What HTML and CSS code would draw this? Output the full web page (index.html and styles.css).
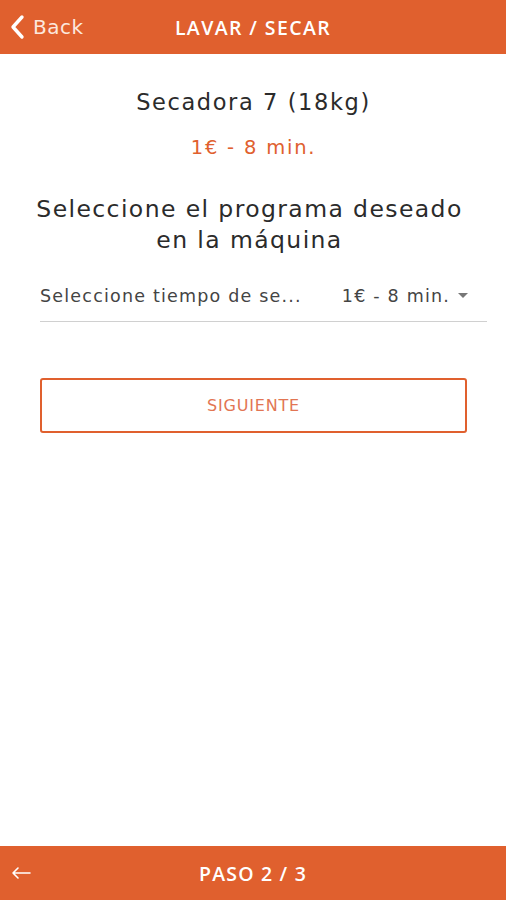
FILE: index.html
```html
<!DOCTYPE html>
<html lang="es">
<head>
<meta charset="utf-8">
<link rel="stylesheet" href="styles.css">
</head>
<body>
<div class="app">
  <header class="topbar">
    <div class="back">
      <svg class="chev" width="16" height="26" viewBox="0 0 16 26"><path d="M13 3 L4 13 L13 23" fill="none" stroke="#fff" stroke-width="3.4" stroke-linecap="round" stroke-linejoin="round"/></svg>
      <span>Back</span>
    </div>
    <div class="title">LAVAR / SECAR</div>
  </header>
  <main class="content">
    <h1 class="machine">Secadora 7 (18kg)</h1>
    <div class="price">1€ - 8 min.</div>
    <p class="prompt">Seleccione el programa deseado en la máquina</p>
    <div class="select">
      <span class="label">Seleccione tiempo de se...</span>
      <span class="value">1€ - 8 min.</span>
      <svg class="caret" width="10" height="6" viewBox="0 0 10 6"><path d="M0 0 H10 L5 5 Z" fill="#777"/></svg>
    </div>
    <button class="next">SIGUIENTE</button>
  </main>
  <footer class="bottombar">
    <svg class="arrow" width="22" height="14" viewBox="0 0 22 14"><path d="M20 7 H3 M8 2 L3 7 L8 12" fill="none" stroke="#fff" stroke-width="1.6" stroke-linecap="round" stroke-linejoin="round"/></svg>
    <div class="step">PASO 2 / 3</div>
  </footer>
</div>
</body>
</html>
```
FILE: styles.css
```css
* { box-sizing: border-box; }
html, body { margin: 0; padding: 0; }
body {
  font-family: "DejaVu Sans", "Liberation Sans", sans-serif;
  background: #fff;
  color: #2b2b2b;
}
.app {
  width: 506px;
  height: 900px;
  display: flex;
  flex-direction: column;
}
.topbar {
  height: 54px;
  background: #E0602E;
  display: grid;
  grid-template-columns: 1fr auto 1fr;
  align-items: center;
  color: #fff;
}
.back {
  display: flex;
  align-items: center;
  gap: 8px;
  padding-left: 9px;
  font-size: 20px;
  letter-spacing: 0.5px;
  color: #fce7dd;
}
.chev { display: block; }
.title {
  font-family: "Open Sans", sans-serif;
  font-size: 19.5px;
  font-weight: 600;
  letter-spacing: 1.4px;
}
.content {
  flex: 1;
  display: flex;
  flex-direction: column;
  align-items: center;
  padding: 33px 19px 0 40px;
}
.machine {
  margin: 0 20px 0 0;
  font-weight: 400;
  font-size: 22.5px;
  line-height: 30px;
  letter-spacing: 1.6px;
  color: #2b2b2b;
}
.price {
  margin: 18px 20px 0 0;
  font-size: 19.5px;
  line-height: 26px;
  letter-spacing: 1.8px;
  color: #E0602E;
}
.prompt {
  margin: 33px 20px 0 -8px;
  max-width: 448px;
  font-size: 23.5px;
  line-height: 31px;
  letter-spacing: 1.4px;
  text-align: center;
  color: #2b2b2b;
}
.select {
  align-self: stretch;
  margin-top: 20px;
  display: flex;
  align-items: center;
  border-bottom: 1.5px solid #d0d0d0;
  font-size: 17.5px;
  letter-spacing: 1.2px;
  color: #444;
  padding-bottom: 6px;
  height: 46px;
}
.label { flex: 1; }
.value { margin-right: 8px; }
.caret { margin-right: 19px; }
.next {
  align-self: stretch;
  margin: 56px 20px 0 0;
  height: 55px;
  border: 2px solid #E0602E;
  border-radius: 3px;
  background: #fff;
  color: #E27553;
  font-family: inherit;
  font-size: 16px;
  letter-spacing: 0.8px;
}
.bottombar {
  height: 54px;
  background: #E0602E;
  display: flex;
  align-items: center;
  position: relative;
  justify-content: center;
  color: #fff;
}
.arrow { position: absolute; left: 10px; top: 20px; }
.step {
  font-family: "Open Sans", sans-serif;
  font-size: 19.5px;
  font-weight: 600;
  letter-spacing: 1.2px;
}
```
